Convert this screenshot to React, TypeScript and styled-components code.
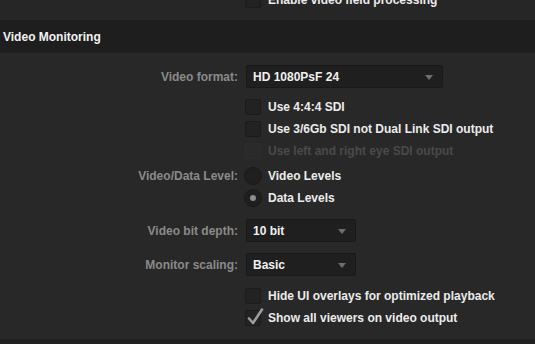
import React from 'react'
import styled, { createGlobalStyle } from 'styled-components'

const GlobalStyle = createGlobalStyle`
  html, body {
    margin: 0;
    padding: 0;
    background: #282828;
  }
  body {
    font-family: "Liberation Sans", Helvetica, Arial, sans-serif;
    font-size: 12px;
    font-weight: 700;
    -webkit-font-smoothing: antialiased;
  }
`

const Check = ({ label, checked = false, disabled = false }: { label: string; checked?: boolean; disabled?: boolean }) => (
  <OptionRow $disabled={disabled}>
    <Box $disabled={disabled}>
      {checked && (
        <svg width="20" height="20" viewBox="0 0 20 20">
          <path d="M4 11.5 L8 16 L17 2.5" fill="none" stroke="#9c9c9c" strokeWidth="2.6" strokeLinecap="round" strokeLinejoin="round" />
        </svg>
      )}
    </Box>
    {label}
  </OptionRow>
)

const Radio = ({ label, selected = false }: { label: string; selected?: boolean }) => (
  <OptionRow>
    <Circle>{selected && <Dot />}</Circle>
    {label}
  </OptionRow>
)

const Select = ({ value, width }: { value: string; width: number }) => (
  <Dropdown $width={width}>
    {value}
    <Caret />
  </Dropdown>
)

const App = () => (
  <Page>
    <GlobalStyle />
    <TopSection>
      <Field $top={-11}>
        <span />
        <Check label="Enable video field processing" />
      </Field>
    </TopSection>
    <Header>Video Monitoring</Header>
    <Form>
      <Field $center>
        <Label>Video format:</Label>
        <Select value="HD 1080PsF 24" width={197} />
      </Field>
      <Field $top={8}>
        <span />
        <Stack>
          <Check label="Use 4:4:4 SDI" />
          <Check label="Use 3/6Gb SDI not Dual Link SDI output" />
          <Check label="Use left and right eye SDI output" disabled />
        </Stack>
      </Field>
      <Field $top={3}>
        <Label>Video/Data Level:</Label>
        <Stack>
          <Radio label="Video Levels" />
          <Radio label="Data Levels" selected />
        </Stack>
      </Field>
      <Field $top={10} $center>
        <Label>Video bit depth:</Label>
        <Select value="10 bit" width={110} />
      </Field>
      <Field $top={11} $center>
        <Label>Monitor scaling:</Label>
        <Select value="Basic" width={110} />
      </Field>
      <Field $top={9}>
        <span />
        <Stack>
          <Check label="Hide UI overlays for optimized playback" />
          <Check label="Show all viewers on video output" checked />
        </Stack>
      </Field>
    </Form>
    <BottomStrip />
  </Page>
)

export default App

const Page = styled.div`
  width: 535px;
  height: 344px;
  overflow: hidden;
  display: flex;
  flex-direction: column;
  background: #282828;
`

const TopSection = styled.div`
  height: 20px;
  overflow: hidden;
  background: #262626;
`

const Header = styled.div`
  height: 33px;
  display: flex;
  align-items: center;
  padding-left: 3px;
  padding-top: 1px;
  box-sizing: border-box;
  background: #1e1e1e;
  color: #f2f2f2;
  font-size: 12px;
`

const Form = styled.div`
  display: flex;
  flex-direction: column;
  padding: 12px 0 10px;
  background: #282828;
`

const Field = styled.div<{ $top?: number; $center?: boolean }>`
  display: grid;
  grid-template-columns: 238px 1fr;
  column-gap: 7px;
  align-items: ${p => (p.$center ? 'center' : 'start')};
  margin-top: ${p => p.$top ?? 0}px;
`

const Label = styled.div`
  text-align: right;
  color: #8a8a8a;
  line-height: 22px;
`

const Stack = styled.div`
  display: flex;
  flex-direction: column;
`

const OptionRow = styled.div<{ $disabled?: boolean }>`
  display: flex;
  align-items: center;
  gap: 7px;
  height: 22px;
  color: ${p => (p.$disabled ? '#4a4a4a' : '#ececec')};
  white-space: nowrap;
`

const Box = styled.div<{ $disabled?: boolean }>`
  position: relative;
  width: 16px;
  height: 16px;
  box-sizing: border-box;
  border-radius: 2px;
  background: ${p => (p.$disabled ? '#2a2a2a' : '#222222')};
  border: 1px solid ${p => (p.$disabled ? '#2d2d2d' : '#1b1b1b')};
  flex-shrink: 0;

  svg {
    position: absolute;
    left: -1px;
    top: -4px;
  }
`

const Circle = styled.div`
  width: 18px;
  height: 18px;
  margin-left: -1px;
  margin-right: -1px;
  border-radius: 50%;
  background: #1f1f1f;
  border: 1px solid #1a1a1a;
  box-sizing: border-box;
  display: flex;
  align-items: center;
  justify-content: center;
  flex-shrink: 0;
`

const Dot = styled.div`
  width: 6px;
  height: 6px;
  border-radius: 50%;
  background: #8e8e8e;
`

const Dropdown = styled.div<{ $width: number }>`
  position: relative;
  width: ${p => p.$width}px;
  height: 23px;
  box-sizing: border-box;
  margin-left: 1px;
  padding-left: 6px;
  display: flex;
  align-items: center;
  background: #1f1f1f;
  border: 1px solid #191919;
  border-radius: 2px;
  color: #f0f0f0;
`

const Caret = styled.span`
  position: absolute;
  right: 9px;
  top: 9px;
  width: 0;
  height: 0;
  border-left: 4px solid transparent;
  border-right: 4px solid transparent;
  border-top: 5px solid #6e6e6e;
`

const BottomStrip = styled.div`
  flex: 1;
  background: #202020;
`
